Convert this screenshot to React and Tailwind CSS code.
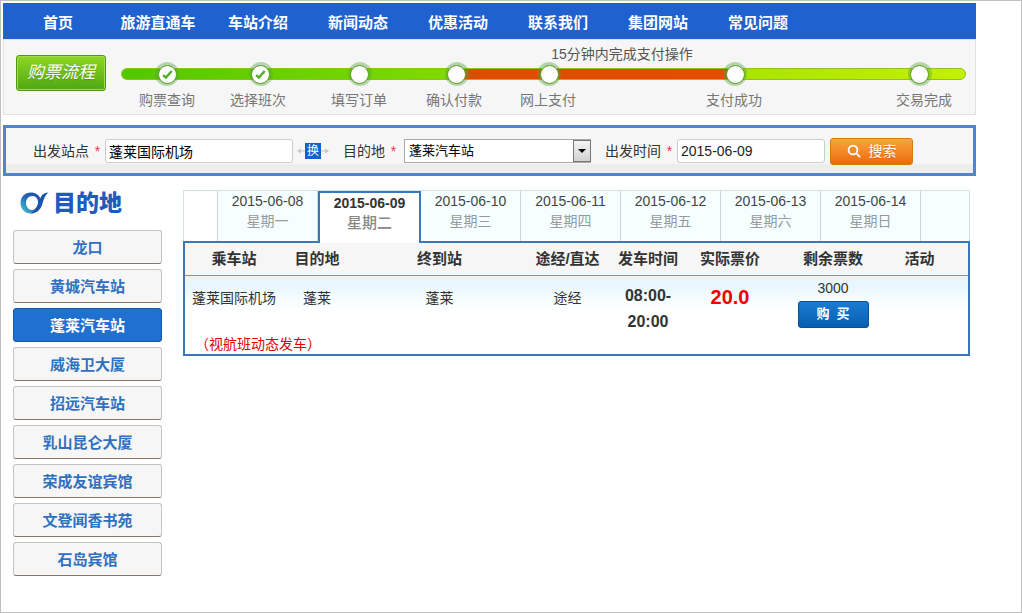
import { useState } from "react";

const NAV = ["首页", "旅游直通车", "车站介绍", "新闻动态", "优惠活动", "联系我们", "集团网站", "常见问题"];

const STEPS = [
  { label: "购票查询", done: true },
  { label: "选择班次", done: true },
  { label: "填写订单", done: false },
  { label: "确认付款", done: false },
  { label: "网上支付", done: false },
  { label: "支付成功", done: false },
  { label: "交易完成", done: false },
];

const DESTINATIONS = [
  "龙口",
  "黄城汽车站",
  "蓬莱汽车站",
  "威海卫大厦",
  "招远汽车站",
  "乳山昆仑大厦",
  "荣成友谊宾馆",
  "文登闻香书苑",
  "石岛宾馆",
];

const DAYS = [
  { date: "2015-06-08", week: "星期一" },
  { date: "2015-06-09", week: "星期二" },
  { date: "2015-06-10", week: "星期三" },
  { date: "2015-06-11", week: "星期四" },
  { date: "2015-06-12", week: "星期五" },
  { date: "2015-06-13", week: "星期六" },
  { date: "2015-06-14", week: "星期日" },
];

const COLUMNS = [
  { label: "乘车站", cls: "w-[98px]" },
  { label: "目的地", cls: "w-[68px]" },
  { label: "终到站", cls: "" },
  { label: "途经/直达", cls: "w-[79px]" },
  { label: "发车时间", cls: "w-[82px]" },
  { label: "实际票价", cls: "w-[82px]" },
  { label: "剩余票数", cls: "w-[124px]" },
  { label: "活动", cls: "w-[73px] pr-6" },
];

function TopNav() {
  return (
    <nav className="flex h-9 items-center bg-[#1f61cf] pt-[3px] pl-[5px]">
      {NAV.map(item => (
        <a key={item} href="#" className="w-[100px] text-center text-[15px] leading-5 font-bold text-white">
          {item}
        </a>
      ))}
    </nav>
  );
}

function StepDot({ done }) {
  return (
    <span className="flex size-6 shrink-0 items-center justify-center rounded-full bg-[#58a040]/40">
      <span className="flex size-[19px] items-center justify-center rounded-full border border-[#55a01c] bg-white">
        {done && (
          <svg viewBox="0 0 12 12" className="size-[11px]" fill="none" stroke="#4fae22" strokeWidth="2.6">
            <path d="M1.2 6.6 4.3 9.4 10.6 2.2" />
          </svg>
        )}
      </span>
    </span>
  );
}

function Progress() {
  return (
    <section className="flex h-[76px] gap-[15px] border border-[#e2e2e2] bg-[#f6f6f6] pr-[9px] pl-3">
      <div className="mt-[15px] flex h-9 w-[90px] shrink-0 items-center justify-center rounded-[3px] border border-[#4d9a12] bg-linear-to-b from-[#8fd622] to-[#4fa713] text-[17px] leading-6 text-white italic shadow-[inset_0_0_0_1px_#9fdc4a] text-shadow-sm">
        购票流程
      </div>
      <div className="min-w-0 flex-1">
        <p className="mt-1 h-5 pl-[157px] text-center text-sm leading-5 text-[#555]">15分钟内完成支付操作</p>
        {/* green up to payment, red during the 15 minute window, lime after */}
        <div className="mt-1 grid h-3 grid-cols-[94fr_99fr_97fr_93fr_186fr_185fr_60px] rounded-full border border-[#8cc41a] bg-[linear-gradient(90deg,#52c800_0%,#82da00_39.6%,#e04a00_39.6%,#e84a00_72.8%,#a9e400_72.8%,#c4f000_100%)] px-[15px]">
          {STEPS.map(s => (
            <div key={s.label} className="flex h-[10px] w-[60px] items-center justify-center">
              <StepDot done={s.done} />
            </div>
          ))}
        </div>
        <ol className="mt-[10px] grid grid-cols-[91fr_101fr_95fr_94fr_186fr_190fr_60px] pr-3 pl-4">
          {STEPS.map(s => (
            <li key={s.label} className="w-[60px] text-center text-sm leading-5 text-[#777]">{s.label}</li>
          ))}
        </ol>
      </div>
    </section>
  );
}

function FieldLabel({ htmlFor, children }) {
  return (
    <label htmlFor={htmlFor} className="flex shrink-0 gap-[5px] text-sm leading-5 text-[#333]">
      {children}
      <span className="w-[7px] text-center text-[#e8344e]">*</span>
    </label>
  );
}

function SearchBar() {
  const [from, setFrom] = useState("蓬莱国际机场");
  const [to, setTo] = useState("蓬莱汽车站");
  const [date, setDate] = useState("2015-06-09");

  return (
    <form
      onSubmit={e => e.preventDefault()}
      className="mt-[10px] flex h-[51px] items-center border-[3px] border-[#4f86c6] bg-[linear-gradient(#f6f6f6_36px,#ededed_36px)] pt-px pl-[27px]"
    >
      <FieldLabel htmlFor="from">出发站点</FieldLabel>
      <input
        id="from"
        value={from}
        onChange={e => setFrom(e.target.value)}
        className="ml-1 h-6 w-[188px] rounded-[3px] border border-[#ccc] bg-white px-[3px] text-sm text-black"
      />
      <button type="button" aria-label="换" className="ml-1 flex items-center">
        <svg viewBox="0 0 8 8" className="size-2" fill="#c4c8cc">
          <path d="M0 4 4 1.5V3.5H8V4.5H4V6.5Z" />
        </svg>
        <span className="size-4 bg-[#1263c8] text-center text-xs leading-4 text-white">换</span>
        <svg viewBox="0 0 8 8" className="size-2" fill="#c4c8cc">
          <path d="M8 4 4 1.5V3.5H0V4.5H4V6.5Z" />
        </svg>
      </button>
      <div className="ml-[14px] flex items-center">
        <FieldLabel htmlFor="to">目的地</FieldLabel>
        <div className="relative ml-[7px]">
          <select
            id="to"
            value={to}
            onChange={e => setTo(e.target.value)}
            className="block h-6 w-[187px] appearance-none border border-[#aaa] bg-white pl-1 text-[13px] text-black"
          >
            {DESTINATIONS.map(d => <option key={d}>{d}</option>)}
          </select>
          <span className="pointer-events-none absolute top-px right-0 flex h-[22px] w-[18px] items-center justify-center border border-[#777] bg-linear-to-b from-[#f4f4f4] to-[#d2d2d2]">
            <svg viewBox="0 0 8 4" className="h-1 w-2"><path d="M0 0H8L4 4Z" /></svg>
          </span>
        </div>
      </div>
      <div className="ml-[14px] flex items-center">
        <FieldLabel htmlFor="date">出发时间</FieldLabel>
        <input
          id="date"
          value={date}
          onChange={e => setDate(e.target.value)}
          className="ml-1 h-6 w-[148px] rounded-[3px] border border-[#ccc] bg-white px-[3px] text-sm text-[#222]"
        />
      </div>
      <button
        type="submit"
        className="ml-[5px] flex h-[27px] w-[83px] items-center justify-center gap-2 rounded-[3px] border border-[#d9780f] bg-linear-to-b from-[#fba43c] to-[#ea6a05] text-sm leading-5 text-white text-shadow-2xs"
      >
        <svg viewBox="0 0 14 14" className="size-[14px]" fill="none" stroke="#fff" strokeWidth="1.8" strokeLinecap="round">
          <circle cx="6" cy="6" r="4.4" />
          <path d="M9.4 9.4 12.6 12.6" />
        </svg>
        搜索
      </button>
    </form>
  );
}

function Sidebar() {
  const [active, setActive] = useState("蓬莱汽车站");

  return (
    <aside className="w-[149px] shrink-0">
      <h2 className="flex h-[30px] items-center gap-1 pl-[7px] text-[23px] leading-7 font-black text-[#1f5bbd]">
        <svg viewBox="0 0 29 22" className="h-[22px] w-[29px]" fill="none">
          <defs>
            <linearGradient id="ring" x1="1" y1="0" x2="0" y2="1">
              <stop offset="0" stopColor="#1a4ba8" />
              <stop offset="0.5" stopColor="#2467b8" />
              <stop offset="1" stopColor="#4fd0d0" />
            </linearGradient>
          </defs>
          <path
            fill="url(#ring)"
            fillRule="evenodd"
            d="M11 .5C4.800 .5 .5 5 .5 11S4.800 21.500 10.500 21.500c4.300 0 8-2.500 9.500-8.500L21 7.500C19 3 15.500 .5 11 .5ZM12.500 4c3.500 0 5.800 3 5.500 7-.3 4-2.800 7-6 7-3.600 0-6-3.300-6-7.200C6 6.800 8.800 4 12.500 4Z"
          />
          <path fill="#1c53ae" d="M28.500 .5C23.500 .8 21.600 3 19.800 7.400 18 12.500 16 17.500 11 21.400c6.500-.4 9.500-4.200 11.200-9C23.800 7.300 25 3 28.500 .5Z" />
        </svg>
        目的地
      </h2>
      <ul className="mt-3 flex flex-col gap-[5px]">
        {DESTINATIONS.map(d => (
          <li key={d}>
            <button
              onClick={() => setActive(d)}
              className={`block h-[34px] w-full rounded-[3px] border pt-px text-[15px] leading-5 font-bold ${
                d === active
                  ? "border-[#1858a8] bg-[#1f70cf] text-white"
                  : "border-[#c4c4c4] border-b-[#8a7565] bg-[#f6f6f6] text-[#2f70bf]"
              }`}
            >
              {d}
            </button>
          </li>
        ))}
      </ul>
    </aside>
  );
}

function DayTabs() {
  const [active, setActive] = useState("2015-06-09");

  return (
    <div className="flex h-[51px] border-x border-t border-[#d3e3e3] bg-[#f5ffff]">
      <div className="w-[34px] border-r border-[#ccd6d6] bg-white" />
      {DAYS.map(d =>
        d.date === active ? (
          <button
            key={d.date}
            className="relative z-10 -mb-[2px] w-[103px] border-2 border-b-0 border-[#3a78bc] bg-white text-sm leading-5 font-bold text-[#333]"
          >
            {d.date}
            <span className="block pb-[10px] text-[15px] font-medium text-[#888]">{d.week}</span>
          </button>
        ) : (
          <button
            key={d.date}
            onClick={() => setActive(d.date)}
            className="w-[100px] border-r border-[#ccd6d6] text-sm leading-5 text-[#444]"
          >
            {d.date}
            <span className="block pb-[10px] text-[#999]">{d.week}</span>
          </button>
        )
      )}
      <div className="flex-1" />
    </div>
  );
}

function Schedule() {
  return (
    <div className="h-[115px] border-2 border-[#3a78bc] bg-white">
      <table className="w-full table-fixed border-collapse text-center text-sm leading-5 text-[#333]">
        <thead>
          <tr className="h-8 border-b border-[#5b9fd0] bg-[#f6f6f6] text-[15px]">
            {COLUMNS.map(c => (
              <th key={c.label} className={`px-0 pt-px font-bold whitespace-nowrap ${c.cls}`}>{c.label}</th>
            ))}
          </tr>
        </thead>
        <tbody>
          <tr className="bg-[linear-gradient(#e6f4fc,#ecf8fe_16px,#f6fdff_24px,#fff_38px)] align-top">
            <td className="pt-3">蓬莱国际机场</td>
            <td className="pt-3">蓬莱</td>
            <td className="pt-3">蓬莱</td>
            <td className="pt-3">途经</td>
            <td className="pt-[7px] text-base leading-[26px] font-bold">08:00-<br />20:00</td>
            <td className="pt-2 text-xl leading-[26px] font-bold text-[#f00000]">20.0</td>
            <td className="pt-[2px]">
              3000
              <button className="mx-auto mt-[3px] block h-[27px] w-[71px] rounded-[3px] border border-[#08509a] bg-linear-to-b from-[#1a7bd0] to-[#0560b0] text-[13px] leading-5 font-bold text-white">
                购&nbsp; 买
              </button>
            </td>
            <td />
          </tr>
          <tr>
            <td colSpan={8} className="pl-[10px] text-left leading-[18px] text-[#e00000]">（视航班动态发车）</td>
          </tr>
        </tbody>
      </table>
    </div>
  );
}

export default function App() {
  return (
    <div className="min-h-screen border border-[#c0c0c0] bg-white p-[2px] font-['Liberation_Sans','Noto_Sans_CJK_SC',sans-serif]">
      <div className="max-w-[973px]">
        <TopNav />
        <Progress />
        <SearchBar />
        <div className="mt-3 flex gap-[21px] pr-[6px] pl-[10px]">
          <Sidebar />
          <main className="min-w-0 flex-1 pt-[2px]">
            <DayTabs />
            <Schedule />
          </main>
        </div>
      </div>
    </div>
  );
}
